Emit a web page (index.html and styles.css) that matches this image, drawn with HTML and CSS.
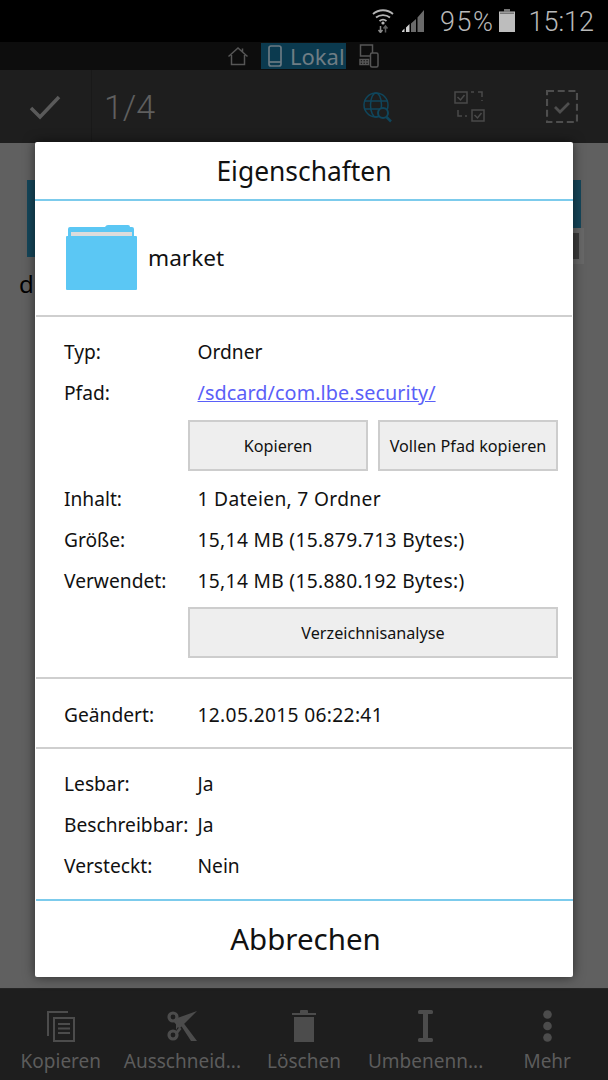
FILE: index.html
```html
<!DOCTYPE html>
<html lang="de">
<head>
<meta charset="utf-8">
<title>Eigenschaften</title>
<link rel="stylesheet" href="styles.css">
</head>
<body>
<div class="screen">
  <header class="status">
    <svg class="ic-wifi" width="22" height="24" viewBox="0 0 22 24"><g fill="none" stroke="#b4b4b4" stroke-width="1.800"><path d="M1 5C6.500 0 15.500 0 21 5"/><path d="M4 8.500c4-3.300 10-3.300 14 0"/><path d="M7.500 12c2-1.500 5-1.500 7 0"/></g><circle cx="11" cy="14" r="1.600" fill="#b4b4b4"/><path d="M8.500 17v6.500M6.500 21l2 2.500 2-2.500" fill="none" stroke="#8a8a8a" stroke-width="1.500"/><path d="M13.500 23.500V17M11.500 19.500l2-2.500 2 2.500" fill="none" stroke="#5e5e5e" stroke-width="1.500"/></svg>
    <svg class="ic-signal" width="22" height="22" viewBox="0 0 22 22"><path d="M0 22h2.500v-3.500L0 21zM4 22h3.500v-8L4 17.500z" fill="#d0d0d0"/><path d="M9 22h5V9l-5 4.500zM15.500 22H22V0l-6.500 7.500z" fill="#6a6a6a"/></svg>
    <span class="pct">95%</span>
    <svg class="ic-batt" width="16" height="23" viewBox="0 0 16 23"><path d="M5 0h6v2.500H5z" fill="#777"/><path d="M0 2.500h16V23H0z" fill="#bdbdbd"/><path d="M1 3.500h14v1.500H1z" fill="#777"/></svg>
    <span class="clock">15:12</span>
  </header>
  <nav class="crumbs">
    <svg width="20" height="20" viewBox="0 0 20 20" fill="none" stroke="#565656" stroke-width="1.500"><path d="M0.500 10.500L10 2l9.500 8.500M3.500 9v9.500h13V9M14.500 2.500V6"/></svg>
    <div class="local">
      <svg width="14" height="22" viewBox="0 0 14 22" fill="none" stroke="#6b7a82" stroke-width="1.700"><rect x="1" y="1" width="12" height="20" rx="2"/><path d="M1 17h12"/></svg>
      <span>Lokal</span>
    </div>
    <svg width="20" height="24" viewBox="0 0 20 24" fill="none" stroke="#565656" stroke-width="1.500"><rect x="1.500" y="1" width="12" height="11"/><rect x="11.500" y="9" width="7.500" height="14" rx="1.500" fill="#0d0d0d"/><path d="M1 15.500h8.500v5H1zM1 18h8.500M3.800 15.500v5M6.600 15.500v5"/></svg>
  </nav>
  <div class="toolbar">
    <div class="check-cell">
      <svg width="32" height="28" viewBox="0 0 32 28" fill="none" stroke="#5a5a5a" stroke-width="3.500"><path d="M2 15l9 9L30 4"/></svg>
    </div>
    <span class="count">1/4</span>
    <div class="tools">
      <svg width="30" height="32" viewBox="0 0 30 32" fill="none" stroke="#10465c" stroke-width="1.500"><circle cx="13" cy="14" r="12"/><ellipse cx="13" cy="14" rx="5.500" ry="12"/><path d="M1 10h24M1 18h17"/><circle cx="20" cy="22" r="5" fill="#1e1e1e" stroke-width="2"/><path d="M23.500 26l4.500 4.500" stroke-width="2.500"/></svg>
      <svg width="31" height="31" viewBox="0 0 31 31" fill="none" stroke="#4a4a4a" stroke-width="1.500"><rect x="1" y="1" width="12" height="11"/><path d="M3.500 6l3 3 4-5M17 1h3M24 1h4v5M28 9v1M4 19v6h4M11 25h2"/><rect x="18" y="19" width="12" height="11"/><path d="M20.500 24l3 3 4-5"/></svg>
      <svg width="32" height="33" viewBox="0 0 32 33" fill="none" stroke="#4e4e4e" stroke-width="2.200"><rect x="1" y="1" width="30" height="31" stroke-dasharray="7 3.700"/><path d="M9 17l5 5 9-9" stroke-width="2.800"/></svg>
    </div>
  </div>
  <main class="content">
    <span class="behind-folder left"></span>
    <span class="behind-folder right"></span>
    <span class="behind-thumb"></span>
    <span class="behind-text">d</span>
  </main>
  <footer class="actions">
    <div class="action">
      <svg width="30" height="32" viewBox="0 0 30 32" fill="none" stroke="#4c4c4c" stroke-width="2"><path d="M22 2H2v24"/><path d="M8 8h20v23H8z"/><path d="M12 14h12M12 18.500h12M12 23h12"/></svg>
      <span>Kopieren</span>
    </div>
    <div class="action">
      <svg width="30" height="32" viewBox="0 0 30 32"><g fill="none" stroke="#4c4c4c" stroke-width="3.200"><circle cx="6" cy="7" r="4"/><circle cx="6" cy="25" r="4"/></g><path d="M9 8.500L30 1 13 18l-2-1 -2 3zM13 14l3.500-1L30 31h-6z" fill="#4c4c4c"/><path d="M8.500 10l5 6-1.500 2-5-6zM8.500 22l4-5 2 2-4 5z" fill="#4c4c4c"/></svg>
      <span>Ausschneid...</span>
    </div>
    <div class="action">
      <svg width="24" height="32" viewBox="0 0 24 32" fill="#4c4c4c"><path d="M0 3h8V1q0-1 1-1h6q1 0 1 1v2h8v2H0zM2 7h20v25H2z"/></svg>
      <span>Löschen</span>
    </div>
    <div class="action">
      <svg width="15" height="32" viewBox="0 0 15 32" fill="#4c4c4c"><path d="M1.500 0h12Q15 0 15 1.500v1Q15 4 13.500 4H10v24h3.500q1.500 0 1.500 1.500v1q0 1.500-1.500 1.500h-12Q0 32 0 30.500v-1Q0 28 1.500 28H5V4H1.500Q0 4 0 2.500v-1Q0 0 1.500 0z"/></svg>
      <span>Umbenenn...</span>
    </div>
    <div class="action">
      <svg width="9" height="32" viewBox="0 0 9 32" fill="#4c4c4c"><circle cx="4.500" cy="4.500" r="4.300"/><circle cx="4.500" cy="16" r="4.300"/><circle cx="4.500" cy="27.500" r="4.300"/></svg>
      <span>Mehr</span>
    </div>
  </footer>

  <section class="dialog">
    <h1 class="title">Eigenschaften</h1>
    <div class="head">
      <svg class="folder" width="71" height="65" viewBox="0 0 71 65"><path d="M2 13V4q0-2 2-2h35q1-2 3-2h20q2 0 2 2h2q2 0 2 2v9z" fill="#5bc7f4"/><path d="M5 7h61v5H5z" fill="#dcdcdc"/><path d="M1 11h69q1 0 1 1v52q0 1-1 1H1q-1 0-1-1V12q0-1 1-1z" fill="#5bc7f4"/></svg>
      <span>market</span>
    </div>
    <div class="block info">
      <div class="row"><span class="k">Typ:</span><span>Ordner</span></div>
      <div class="row"><span class="k">Pfad:</span><a class="link" href="#">/sdcard/com.lbe.security/</a></div>
      <div class="btns">
        <button class="btn">Kopieren</button>
        <button class="btn">Vollen Pfad kopieren</button>
      </div>
      <div class="row"><span class="k">Inhalt:</span><span class="num">1 Dateien, 7 Ordner</span></div>
      <div class="row"><span class="k">Größe:</span><span class="num">15,14 MB (15.879.713 Bytes:)</span></div>
      <div class="row"><span class="k">Verwendet:</span><span class="num">15,14 MB (15.880.192 Bytes:)</span></div>
      <div class="btns btns-last">
        <button class="btn">Verzeichnisanalyse</button>
      </div>
    </div>
    <div class="block changed">
      <div class="row"><span class="k">Geändert:</span><span class="num">12.05.2015 06:22:41</span></div>
    </div>
    <div class="block perms">
      <div class="row"><span class="k">Lesbar:</span><span>Ja</span></div>
      <div class="row"><span class="k">Beschreibbar:</span><span>Ja</span></div>
      <div class="row"><span class="k">Versteckt:</span><span>Nein</span></div>
    </div>
    <div class="cancel">Abbrechen</div>
  </section>
</div>
</body>
</html>
```

FILE: styles.css
```css
* { box-sizing: border-box; }
html, body { margin: 0; padding: 0; }
body { width: 608px; height: 1080px; overflow: hidden; font-family: "Noto Sans", "Open Sans", sans-serif; background: #000; }
.screen { position: relative; width: 608px; height: 1080px; display: flex; flex-direction: column; }

.status { height: 42px; background: #000; display: flex; align-items: center; justify-content: flex-end; padding: 2px 14px 0 0; color: #b9b9b9; font-family: Roboto, sans-serif; font-weight: 300; font-size: 27px; }
.status svg { margin-top: -3px; }
.ic-wifi { margin-right: 8px; }
.ic-signal { margin-right: 16px; }
.pct { margin-right: 5px; letter-spacing: 1.5px; }
.ic-batt { margin-right: 13px; }

.crumbs { height: 28px; background: #0d0d0d; display: flex; align-items: center; justify-content: center; gap: 13px; padding-right: 1px; }
.local { height: 26px; width: 85px; background: #0b3a4f; display: flex; align-items: center; gap: 8px; padding-left: 7px; color: #6f7d84; font-size: 22px; }

.toolbar { height: 73px; background: #1e1e1e; display: flex; align-items: center; }
.check-cell { width: 92px; height: 73px; border-right: 1px solid #191919; display: flex; align-items: center; padding-left: 29px; }
.count { margin-left: 12px; color: #5f5f5f; font-family: Roboto, sans-serif; font-weight: 300; font-size: 34px; }
.tools { margin-left: auto; display: flex; align-items: center; gap: 61px; padding-right: 30px; }

.content { position: relative; flex: 1; background: #606060; overflow: hidden; }
.behind-folder { position: absolute; top: 37px; width: 40px; background: #15465a; }
.behind-folder::before { content: ""; position: absolute; top: -12px; width: 30px; height: 12px; background: #15465a; }
.behind-folder.left { left: 27px; height: 77px; }
.behind-folder.left::before { right: 0; }
.behind-folder.right { right: 27px; height: 48px; }
.behind-folder.right::before { left: 0; }
.behind-thumb { position: absolute; left: 560px; top: 85px; width: 24px; height: 36px; background: #3c3c3c; border: 5px solid #686868; }
.behind-text { position: absolute; left: 19px; top: 124px; font-size: 24px; color: #000; line-height: 34px; }

.actions { height: 92px; background: #1e1e1e; display: grid; grid-template-columns: repeat(5, 1fr); padding-top: 21px; border-top: 1px solid #252525; }
.action { display: flex; flex-direction: column; align-items: center; gap: 6px; color: #5c5c5c; font-size: 19px; white-space: nowrap; }

.dialog { position: absolute; left: 35px; top: 142px; width: 538px; height: 835px; background: #fff; border-radius: 2px; color: #111; font-size: 19.2px; box-shadow: 0 0 12px rgba(0,0,0,.55); display: flex; flex-direction: column; }
.title { margin: 0; height: 59px; display: flex; align-items: center; justify-content: center; border-bottom: 2px solid #7ccbec; font-size: 26.400px; font-weight: 400; }
.head { height: 116px; margin: 0 1px; display: flex; align-items: center; gap: 11px; padding: 0 0 2px 30px; border-bottom: 2px solid #cfcfcf; font-size: 22.600px; }
.block { margin: 0 1px; padding: 0 14px 0 28px; border-bottom: 2px solid #cfcfcf; }
.row { height: 41px; display: flex; align-items: center; }
.k { width: 133.500px; flex: none; }
.num { letter-spacing: .33px; }
.link { color: #5a60f8; text-decoration: underline; font-size: 19.800px; letter-spacing: .08px; }
.btns { display: flex; gap: 10px; margin: 7px 0 7px 124px; }
.btns-last { margin-top: 6px; }
.btn { flex: 1; height: 51px; background: #eee; border: 2px solid #cdcdcd; font: inherit; font-size: 16.200px; color: #111; padding: 0; }
.info { padding-top: 14px; height: 362px; }
.changed { height: 70px; display: flex; align-items: center; padding-top: 3px; }
.perms { height: 152px; padding-top: 14px; border-bottom: 2px solid #7ccbec; margin: 0 0 0 1px; padding-left: 28px; }
.cancel { flex: 1; display: flex; align-items: center; justify-content: center; font-size: 29.500px; padding: 0 0 2px 3px; }
```
